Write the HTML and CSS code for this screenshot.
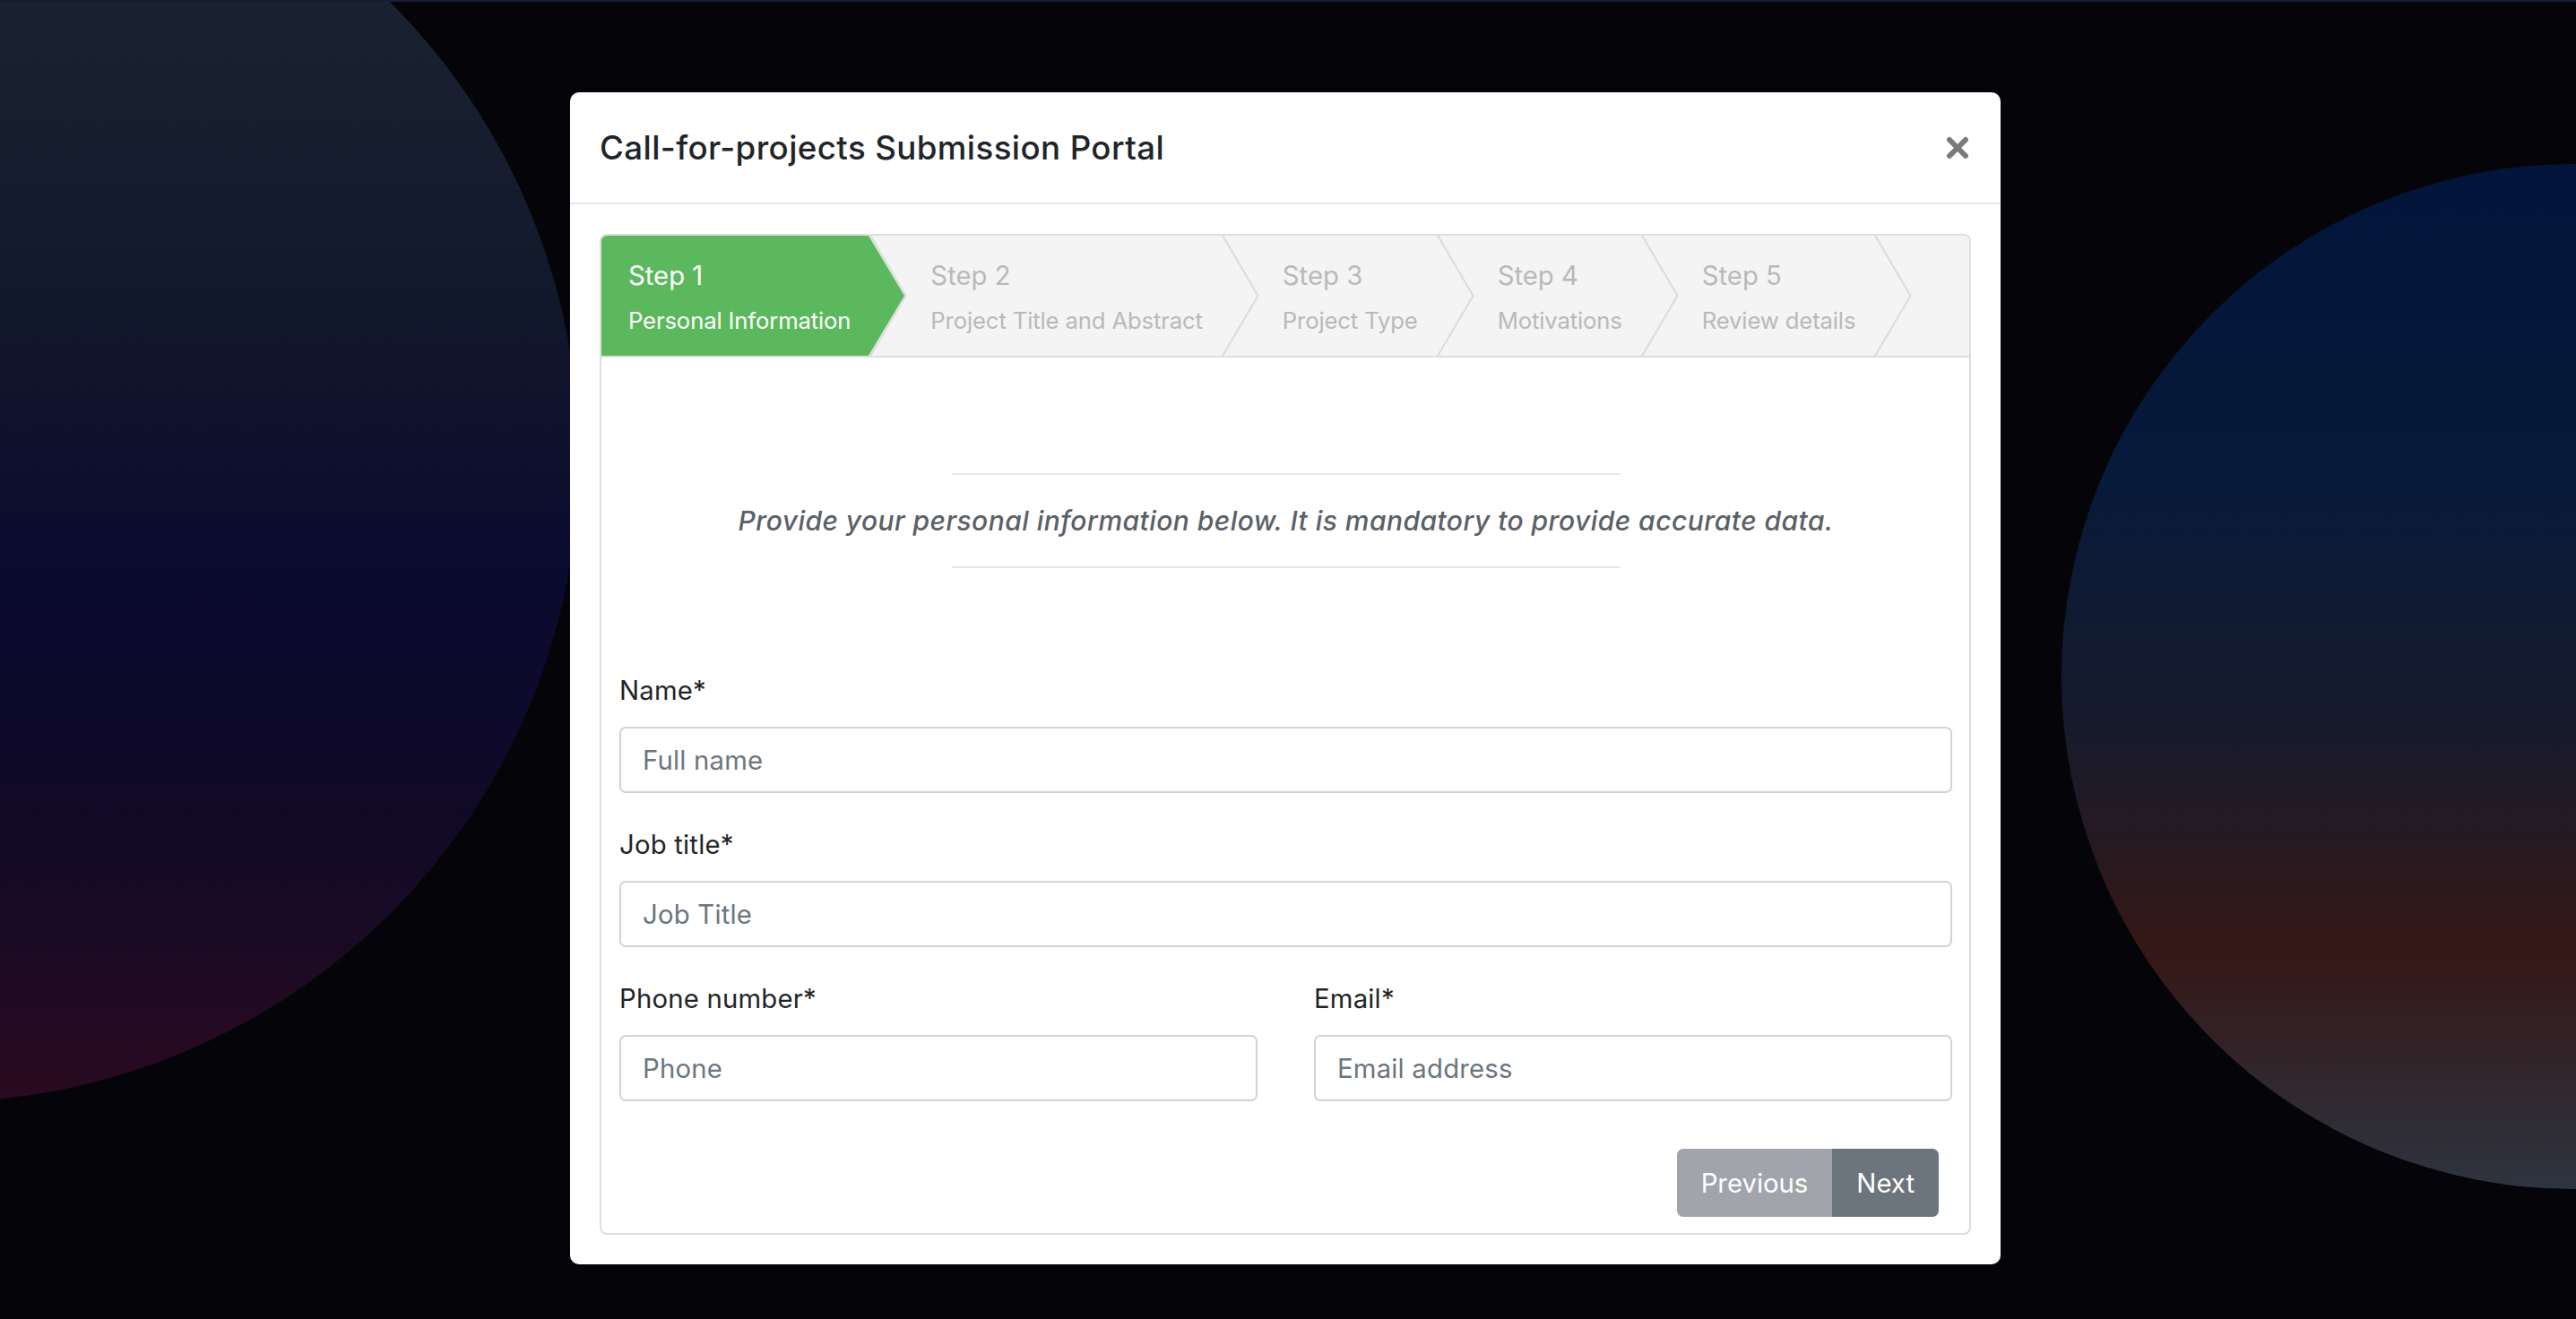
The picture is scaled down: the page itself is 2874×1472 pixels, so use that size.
FILE: index.html
```html
<!DOCTYPE html>
<html lang="en">
<head>
<meta charset="utf-8">
<title>Call-for-projects Submission Portal</title>
<link rel="stylesheet" href="styles.css">
</head>
<body>
  <div class="backdrop">
    <div class="glow glow-left"></div>
    <div class="glow glow-right"></div>
  </div>

  <div class="modal">
    <div class="modal-header">
      <h5 class="modal-title">Call-for-projects Submission Portal</h5>
      <button class="close" type="button" aria-label="Close">
        <svg viewBox="0 0 26 26" width="26" height="26"><path d="M4 4 L22 22 M22 4 L4 22" stroke="#7a7a7a" stroke-width="6" stroke-linecap="round" fill="none"/></svg>
      </button>
    </div>

    <div class="modal-body">
      <div class="wizard">
        <ul class="steps">
          <li class="step active">
            <span class="step-num">Step 1</span>
            <span class="step-desc">Personal Information</span>
            <svg class="step-arrow" viewBox="0 0 44 134" width="44" height="134"><polyline points="1.5,-1 41.5,67 1.5,135" fill="none" stroke="#dcdcdc" stroke-width="2.2"/><polygon points="0,0 40,67 0,134" fill="#5cb85c"/></svg>
          </li>
          <li class="step">
            <span class="step-num">Step 2</span>
            <span class="step-desc">Project Title and Abstract</span>
            <svg class="step-arrow" viewBox="0 0 44 134" width="44" height="134"><polyline points="1.5,-1 41.5,67 1.5,135" fill="none" stroke="#dcdcdc" stroke-width="2.2"/><polygon points="0,0 40,67 0,134" fill="#f4f4f4"/></svg>
          </li>
          <li class="step">
            <span class="step-num">Step 3</span>
            <span class="step-desc">Project Type</span>
            <svg class="step-arrow" viewBox="0 0 44 134" width="44" height="134"><polyline points="1.5,-1 41.5,67 1.5,135" fill="none" stroke="#dcdcdc" stroke-width="2.2"/><polygon points="0,0 40,67 0,134" fill="#f4f4f4"/></svg>
          </li>
          <li class="step">
            <span class="step-num">Step 4</span>
            <span class="step-desc">Motivations</span>
            <svg class="step-arrow" viewBox="0 0 44 134" width="44" height="134"><polyline points="1.5,-1 41.5,67 1.5,135" fill="none" stroke="#dcdcdc" stroke-width="2.2"/><polygon points="0,0 40,67 0,134" fill="#f4f4f4"/></svg>
          </li>
          <li class="step">
            <span class="step-num">Step 5</span>
            <span class="step-desc">Review details</span>
            <svg class="step-arrow" viewBox="0 0 44 134" width="44" height="134"><polyline points="1.5,-1 41.5,67 1.5,135" fill="none" stroke="#dcdcdc" stroke-width="2.2"/><polygon points="0,0 40,67 0,134" fill="#f4f4f4"/></svg>
          </li>
        </ul>

        <div class="wizard-content">
          <div class="intro">
            <hr class="rule">
            <p class="intro-text">Provide your personal information below. It is mandatory to provide accurate data.</p>
            <hr class="rule">
          </div>

          <form class="form">
            <div class="form-group">
              <label class="form-label" for="name">Name*</label>
              <input class="form-control" id="name" type="text" placeholder="Full name">
            </div>
            <div class="form-group">
              <label class="form-label" for="job">Job title*</label>
              <input class="form-control" id="job" type="text" placeholder="Job Title">
            </div>
            <div class="form-row">
              <div class="form-group">
                <label class="form-label" for="phone">Phone number*</label>
                <input class="form-control" id="phone" type="text" placeholder="Phone">
              </div>
              <div class="form-group">
                <label class="form-label" for="email">Email*</label>
                <input class="form-control" id="email" type="text" placeholder="Email address">
              </div>
            </div>
          </form>

          <div class="toolbar">
            <div class="btn-group">
              <button class="btn btn-prev" type="button">Previous</button>
              <button class="btn btn-next" type="button">Next</button>
            </div>
          </div>
        </div>
      </div>
    </div>
  </div>
</body>
</html>
```

FILE: styles.css
```css
* { box-sizing: border-box; }

html, body { margin: 0; padding: 0; }

body {
  position: relative;
  width: 2874px;
  height: 1472px;
  overflow: hidden;
  background: #050509;
  font-family: Inter, "Noto Sans", "Liberation Sans", sans-serif;
  color: #212529;
}

.backdrop {
  position: absolute;
  top: 0;
  left: 0;
  width: 2874px;
  height: 1472px;
  overflow: hidden;
  border-top: 2px solid #141c36;
}

.glow {
  position: absolute;
  border-radius: 50%;
}

.glow-left {
  left: -792px;
  top: -210px;
  width: 1438px;
  height: 1438px;
  background: linear-gradient(180deg, #1d2838 0%, #1a2232 14%, #131a2b 35%, #0a0a2e 60%, #120a26 80%, #2a0a20 100%);
}

.glow-right {
  left: 2300px;
  top: 181px;
  width: 1144px;
  height: 1144px;
  background: linear-gradient(180deg, #02143a 0%, #071a3a 30%, #171b2c 55%, #351816 77%, #2e3440 100%);
}

.modal {
  position: relative;
  width: 1596px;
  margin: 103px 0 0 636px;
  background: #fff;
  border-radius: 10px;
}

.modal-header {
  display: flex;
  align-items: center;
  justify-content: space-between;
  height: 125px;
  padding: 0 33px;
  border-bottom: 2px solid #e3e5e8;
}

.modal-title {
  margin: 0;
  font-size: 36.7px;
  font-weight: 500;
  line-height: 1.5;
  letter-spacing: 0.4px;
  color: #212529;
}

.close {
  display: flex;
  padding: 0;
  margin-right: 2px;
  border: 0;
  background: none;
}

.modal-body {
  padding: 33px;
}

.wizard {
  border: 2px solid #dedede;
  border-radius: 8px;
  overflow: hidden;
}

.steps {
  display: flex;
  height: 136px;
  margin: 0;
  padding: 0;
  list-style: none;
  background: #f4f4f4;
  border-bottom: 2px solid #dedede;
}

.step {
  position: relative;
  padding: 25px 20px 0 69px;
  color: #b9b9b9;
  white-space: nowrap;
}

.step.active {
  padding-left: 30px;
  background: #5cb85c;
  color: #fff;
}

.step-num {
  display: block;
  font-size: 29.3px;
  line-height: 40px;
}

.step-desc {
  display: block;
  margin-top: 12px;
  font-size: 25.7px;
  line-height: 36px;
  letter-spacing: -0.15px;
}

.step-arrow {
  position: absolute;
  top: 0;
  left: 100%;
  z-index: 1;
  overflow: visible;
}

.wizard-content {
  padding: 0 19px 18px 20px;
}

.intro {
  padding-top: 129px;
}

.rule {
  width: 745px;
  margin: 0 auto;
  border: 0;
  border-top: 2px solid #e6e6e6;
}

.intro-text {
  margin: 29px 0;
  font-size: 30px;
  line-height: 44px;
  font-style: italic;
  font-weight: 500;
  letter-spacing: 0.45px;
  text-align: center;
  color: #5a6168;
}

.form {
  margin-top: 115px;
}

.form-group {
  margin-bottom: 36px;
}

.form-label {
  display: block;
  margin-bottom: 18px;
  font-size: 29.3px;
  line-height: 44px;
  letter-spacing: 0.2px;
  color: #212529;
}

.form-control {
  display: block;
  width: 100%;
  height: 74px;
  padding: 0 24px;
  font-family: inherit;
  font-size: 29.3px;
  letter-spacing: 0.2px;
  color: #495057;
  background: #fff;
  border: 2px solid #ced4da;
  border-radius: 7px;
}

.form-control::placeholder {
  color: #6c757d;
}

.form-row {
  display: grid;
  grid-template-columns: 1fr 1fr;
  column-gap: 63px;
}

.toolbar {
  display: flex;
  justify-content: flex-end;
  padding: 17px 15px 0 0;
}

.btn-group {
  display: flex;
}

.btn {
  height: 76px;
  padding: 0 27px;
  font-family: inherit;
  font-size: 29.3px;
  color: #fff;
  border: 0;
}

.btn-prev {
  background: #a1a5ab;
  border-radius: 7px 0 0 7px;
}

.btn-next {
  background: #6c757d;
  border-radius: 0 7px 7px 0;
}
```
